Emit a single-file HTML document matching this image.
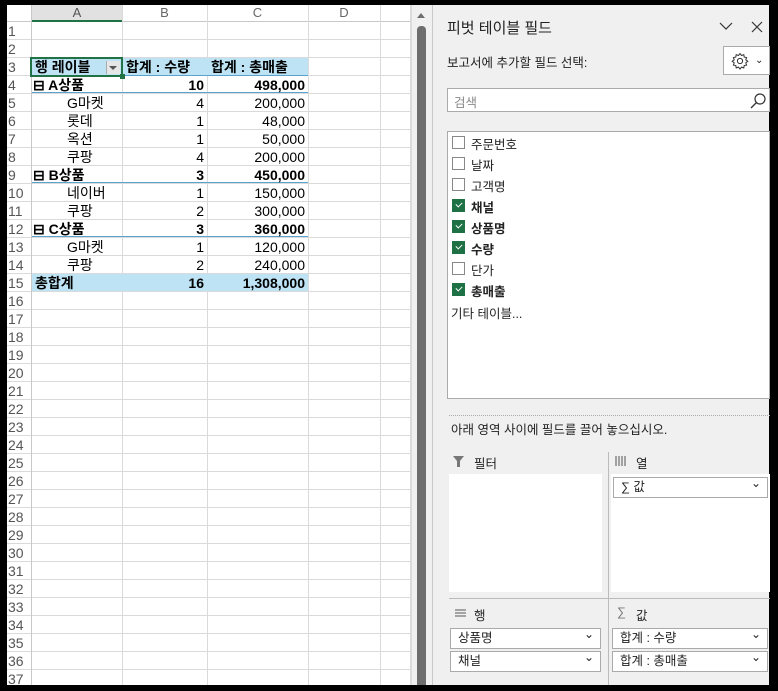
<!DOCTYPE html>
<html><head><meta charset="utf-8"><style>
*{margin:0;padding:0;box-sizing:border-box}
body{width:778px;height:691px;background:#000;position:relative;overflow:hidden;font-family:"Liberation Sans","Noto Sans CJK KR",sans-serif;}
.a{position:absolute}
.sheet{left:7px;top:5px;width:425px;height:680px;background:#fff;overflow:hidden}
.rh{position:absolute;left:0;width:24px;font-size:14px;color:#555;text-align:left;padding-left:1px;line-height:18px}
.hl{position:absolute;height:1px;background:#dadada}
.vl{position:absolute;width:1px;background:#dadada}
.c{position:absolute;font-size:14px;line-height:18px;color:#000;white-space:nowrap}
.b{font-weight:bold}
.r{text-align:right}
.panel{left:432px;top:5px;width:337px;height:680px;background:#f0f0f0;border-left:1px solid #c8c8c8}
.t{position:absolute;font-size:12.5px;color:#222;white-space:nowrap}
.cb{position:absolute;left:19px;width:13px;height:13px;border:1px solid #888;background:#fff}
.cb.on{background:#1e7145;border-color:#1e7145}
.cb.on::after{content:"";position:absolute;left:3px;top:2px;width:5px;height:3px;border-left:1.5px solid #fff;border-bottom:1.5px solid #fff;transform:rotate(-45deg)}
.dd{position:absolute;height:21px;border:1px solid #aaa;background:#fff;font-size:12.5px;line-height:19px;padding-left:7px;color:#222}
.dd::after{content:"⌄";position:absolute;right:6px;top:-4px;font-size:12px}
</style></head><body>
<div class="a sheet">
 <div class="a" style="left:0;top:0;width:425px;height:17px;background:#fff;border-bottom:1px solid #c8c8c8"></div>
 <div class="a" style="left:24px;top:0;width:92px;height:17px;background:#e1e1e1;border-bottom:2px solid #217346;text-align:center;font-size:13px;color:#555;line-height:15px">A</div>
 <div class="c" style="left:115px;top:-1px;width:85px;text-align:center;color:#666;font-size:13px">B</div>
 <div class="c" style="left:200px;top:-1px;width:101px;text-align:center;color:#666;font-size:13px">C</div>
 <div class="c" style="left:301px;top:-1px;width:72px;text-align:center;color:#666;font-size:13px">D</div>
 <div id="rows"></div>
 <div class="vl" style="left:24px;top:0;height:680px;background:#c8c8c8"></div>
 <div class="vl" style="left:115px;top:0;height:680px"></div>
 <div class="vl" style="left:200px;top:0;height:680px"></div>
 <div class="vl" style="left:301px;top:0;height:680px"></div>
 <div class="vl" style="left:373px;top:0;height:680px"></div>
 <div class="vl" style="left:403px;top:0;height:680px"></div>
 <div class="a" style="left:404px;top:0;width:21px;height:680px;background:#f0f0f0;border-left:1px solid #ddd"></div>
 <div class="a" style="left:410px;top:21px;width:9px;height:660px;background:#6e6e6e;border-radius:4px 4px 0 0"></div>
 <div class="a" style="left:410px;top:8px;width:0;height:0;border-left:4px solid transparent;border-right:4px solid transparent;border-bottom:5px solid #6e6e6e"></div>
 <div class="a" style="left:25px;top:53px;width:276px;height:17px;background:#bde3f4"></div>
 <div class="a" style="left:25px;top:269px;width:276px;height:17px;background:#bde3f4"></div>
 <div class="a" style="left:25px;top:87px;width:276px;height:1px;background:#5ba3cf"></div>
 <div class="a" style="left:25px;top:177px;width:276px;height:1px;background:#5ba3cf"></div>
 <div class="a" style="left:25px;top:231px;width:276px;height:1px;background:#5ba3cf"></div>
 <div class="a" style="left:25px;top:70px;width:276px;height:1px;background:#5ba3cf"></div>
 <div class="a" style="left:23px;top:52px;width:93px;height:20px;border:2px solid #217346"></div>
 <div class="a" style="left:113px;top:69px;width:5px;height:5px;background:#217346"></div>
 <div class="a" style="left:99px;top:56px;width:14px;height:13px;background:#e6e6e6;border-left:1px solid #aaa"></div>
 <div class="a" style="left:102px;top:61px;border-left:4px solid transparent;border-right:4px solid transparent;border-top:4px solid #555"></div>
 <div class="c b" style="left:28px;top:53px">행 레이블</div>
 <div class="c b" style="left:119px;top:53px">합계 : 수량</div>
 <div class="c b" style="left:204px;top:53px">합계 : 총매출</div>
 <div id="piv"></div>
</div>
<div class="a panel">
 <div class="t" style="left:14px;top:12px;font-size:15px;color:#222">피벗 테이블 필드</div>
 <svg class="a" style="left:286px;top:17px" width="14" height="9"><path d="M1 1 L7 7 L13 1" stroke="#333" fill="none" stroke-width="1.2"/></svg>
 <svg class="a" style="left:318px;top:16px" width="12" height="12"><path d="M1 1L11 11M11 1L1 11" stroke="#333" stroke-width="1.2"/></svg>
 <div class="t" style="left:14px;top:47px">보고서에 추가할 필드 선택:</div>
 <div class="a" style="left:290px;top:41px;width:47px;height:29px;border:1px solid #aaa;background:#fff"></div>
 <svg class="a" style="left:298px;top:47px" width="18" height="18" viewBox="0 0 18 18"><path d="M9 1.5l1.5 2 2.3-.8.4 2.4 2.4.4-.8 2.3 2 1.5-2 1.5.8 2.3-2.4.4-.4 2.4-2.3-.8-1.5 2-1.5-2-2.3.8-.4-2.4-2.4-.4.8-2.3-2-1.5 2-1.5-.8-2.3 2.4-.4.4-2.4 2.3.8z" fill="none" stroke="#333" stroke-width="1"/><circle cx="9" cy="9" r="2.6" fill="none" stroke="#333"/></svg>
 <div class="t" style="left:322px;top:50px;font-size:10px">⌄</div>
 <div class="a" style="left:14px;top:83px;width:323px;height:24px;border:1px solid #aaa;background:#fff"></div>
 <div class="t" style="left:21px;top:87px;color:#888">검색</div>
 <svg class="a" style="left:317px;top:88px" width="16" height="16"><circle cx="10" cy="6" r="5" fill="none" stroke="#333" stroke-width="1.2"/><path d="M6.5 9.5L1 15" stroke="#333" stroke-width="1.3"/></svg>
 <div class="a" style="left:14px;top:126px;width:323px;height:268px;border:1px solid #aaa;background:#fff"></div>
 <div class="cb" style="top:131px"></div><div class="t" style="left:38px;top:129px">주문번호</div>
 <div class="cb" style="top:152px"></div><div class="t" style="left:38px;top:150px">날짜</div>
 <div class="cb" style="top:173px"></div><div class="t" style="left:38px;top:171px">고객명</div>
 <div class="cb on" style="top:194px"></div><div class="t b" style="left:38px;top:192px">채널</div>
 <div class="cb on" style="top:215px"></div><div class="t b" style="left:38px;top:213px">상품명</div>
 <div class="cb on" style="top:236px"></div><div class="t b" style="left:38px;top:234px">수량</div>
 <div class="cb" style="top:257px"></div><div class="t" style="left:38px;top:255px">단가</div>
 <div class="cb on" style="top:278px"></div><div class="t b" style="left:38px;top:276px">총매출</div>
 <div class="t" style="left:18px;top:298px">기타 테이블...</div>
 <div class="a" style="left:16px;top:410px;width:321px;border-top:1px dotted #aaa"></div>
 <div class="t" style="left:18px;top:414px">아래 영역 사이에 필드를 끌어 놓으십시오.</div>
 <div class="a" style="left:175px;top:447px;width:1px;height:233px;background:#bbb"></div>
 <div class="a" style="left:16px;top:593px;width:321px;height:1px;background:#bbb"></div>
 <svg class="a" style="left:20px;top:451px" width="11" height="11"><path d="M0 0H11L7 5V11H4V5Z" fill="#777"/></svg>
 <div class="t" style="left:41px;top:448px">필터</div>
 <svg class="a" style="left:182px;top:451px" width="12" height="10"><path d="M1 0V10M4 0V10M7 0V10M10 0V10" stroke="#777" stroke-width="1.3"/></svg>
 <div class="t" style="left:203px;top:448px">열</div>
 <div class="a" style="left:16px;top:469px;width:153px;height:118px;background:#fff"></div>
 <div class="a" style="left:178px;top:469px;width:159px;height:118px;background:#fff"></div>
 <div class="dd" style="left:180px;top:472px;width:155px">∑ 값</div>
 <svg class="a" style="left:22px;top:604px" width="11" height="9"><path d="M0 1H11M0 4H11M0 7H11" stroke="#777" stroke-width="1.2"/></svg>
 <div class="t" style="left:41px;top:600px">행</div>
 <div class="t" style="left:184px;top:600px;color:#777">∑</div>
 <div class="t" style="left:203px;top:600px">값</div>
 <div class="dd" style="left:17px;top:623px;width:151px">상품명</div>
 <div class="dd" style="left:17px;top:646px;width:151px">채널</div>
 <div class="dd" style="left:179px;top:623px;width:156px">합계 : 수량</div>
 <div class="dd" style="left:179px;top:646px;width:156px">합계 : 총매출</div>
</div>
<script>
(function(){
var h='';for(var n=1;n<=37;n++){var y=17+(n-1)*18;h+='<div class="rh" style="top:'+y+'px">'+n+'</div><div class="hl" style="left:0;top:'+(y+17)+'px;width:404px"></div>';}
document.getElementById('rows').innerHTML=h;
var d=[[4,'⊟ A상품','10','498,000',1],[5,'G마켓','4','200,000'],[6,'롯데','1','48,000'],[7,'옥션','1','50,000'],[8,'쿠팡','4','200,000'],[9,'⊟ B상품','3','450,000',1],[10,'네이버','1','150,000'],[11,'쿠팡','2','300,000'],[12,'⊟ C상품','3','360,000',1],[13,'G마켓','1','120,000'],[14,'쿠팡','2','240,000'],[15,'총합계','16','1,308,000',2]];
var p='';d.forEach(function(r){var y=17+(r[0]-1)*18;var b=r[4]?' b':'';var l=r[4]==1?26:(r[4]==2?28:60);p+='<div class="c'+b+'" style="left:'+l+'px;top:'+y+'px;">'+r[1]+'</div><div class="c r'+b+'" style="left:115px;width:82px;top:'+y+'px;">'+r[2]+'</div><div class="c r'+b+'" style="left:200px;width:98px;top:'+y+'px;">'+r[3]+'</div>';});
document.getElementById('piv').innerHTML=p;
})();
</script>
</body></html>
